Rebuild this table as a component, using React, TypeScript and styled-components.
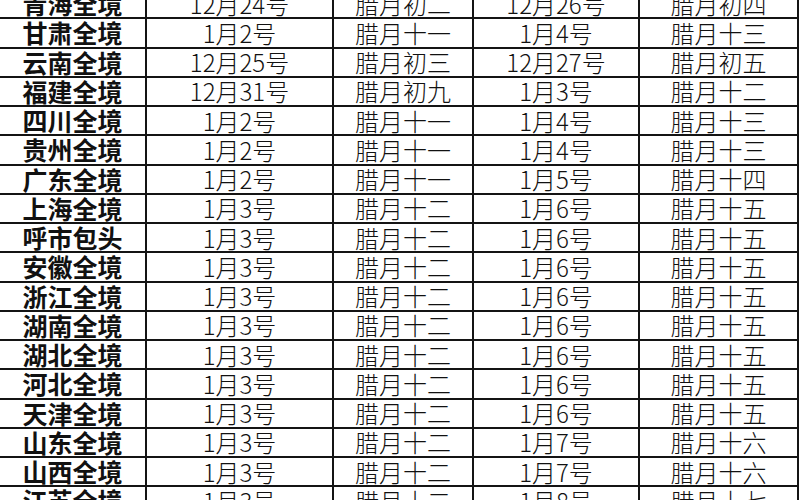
import React from 'react';
import styled, { createGlobalStyle } from 'styled-components';

const GlobalStyle = createGlobalStyle`
  html, body {
    margin: 0;
    padding: 0;
    background: #ffffff;
  }
`;

const Page = styled.div`
  width: 800px;
  height: 500px;
  overflow: hidden;
  background: #ffffff;
`;

const Sheet = styled.div`
  display: grid;
  grid-template-columns: 145px 185px 138px 164px 157px;
  grid-auto-rows: 27.25px;
  gap: 2px;
  width: 799px;
  margin-top: -10px;
  padding-right: 2px;
  box-sizing: border-box;
  background: #141414;
`;

const Cell = styled.div<{ $bold?: boolean }>`
  display: flex;
  align-items: center;
  justify-content: center;
  background: #ffffff;
  color: #111111;
  font-family: 'Noto Sans CJK SC', 'Noto Sans', sans-serif;
  font-size: ${p => (p.$bold ? '25px' : '24px')};
  font-weight: ${p => (p.$bold ? 700 : 300)};
  line-height: 1;
  white-space: nowrap;
`;

type Row = [string, string, string, string, string];

const rows: Row[] = [
  ['青海全境', '12月24号', '腊月初二', '12月26号', '腊月初四'],
  ['甘肃全境', '1月2号', '腊月十一', '1月4号', '腊月十三'],
  ['云南全境', '12月25号', '腊月初三', '12月27号', '腊月初五'],
  ['福建全境', '12月31号', '腊月初九', '1月3号', '腊月十二'],
  ['四川全境', '1月2号', '腊月十一', '1月4号', '腊月十三'],
  ['贵州全境', '1月2号', '腊月十一', '1月4号', '腊月十三'],
  ['广东全境', '1月2号', '腊月十一', '1月5号', '腊月十四'],
  ['上海全境', '1月3号', '腊月十二', '1月6号', '腊月十五'],
  ['呼市包头', '1月3号', '腊月十二', '1月6号', '腊月十五'],
  ['安徽全境', '1月3号', '腊月十二', '1月6号', '腊月十五'],
  ['浙江全境', '1月3号', '腊月十二', '1月6号', '腊月十五'],
  ['湖南全境', '1月3号', '腊月十二', '1月6号', '腊月十五'],
  ['湖北全境', '1月3号', '腊月十二', '1月6号', '腊月十五'],
  ['河北全境', '1月3号', '腊月十二', '1月6号', '腊月十五'],
  ['天津全境', '1月3号', '腊月十二', '1月6号', '腊月十五'],
  ['山东全境', '1月3号', '腊月十二', '1月7号', '腊月十六'],
  ['山西全境', '1月3号', '腊月十二', '1月7号', '腊月十六'],
  ['江苏全境', '1月3号', '腊月十二', '1月8号', '腊月十七'],
];

const App = () => {
  return (
    <Page>
      <GlobalStyle />
      <Sheet>
        {rows.map(row =>
          row.map((text, i) => (
            <Cell key={row[0] + i} $bold={i === 0}>
              {text}
            </Cell>
          )),
        )}
      </Sheet>
    </Page>
  );
};

export default App;
